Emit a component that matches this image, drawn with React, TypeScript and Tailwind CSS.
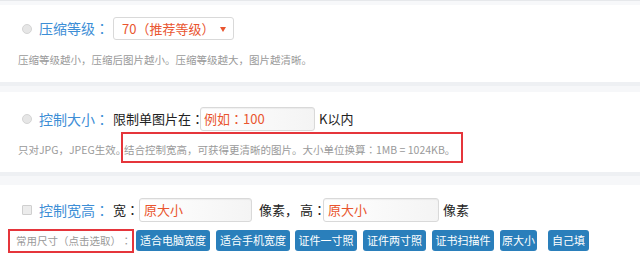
import React from "react";

const C = () => (
  <span className="font-['Noto_Sans_CJK_JP',sans-serif]">：</span>
);

const Radio = () => (
  <span className="inline-block w-[10px] h-[10px] rounded-full border border-[#d4d4d4] bg-[#e6e6e6] shrink-0" />
);
const Check = () => (
  <span className="inline-block w-[10px] h-[10px] rounded-[1px] border border-[#cfcfcf] bg-[#ececec] shrink-0" />
);

const Input = ({ w, children, pl }: { w: string; children: React.ReactNode; pl: string }) => (
  <div
    className={`${w} ${pl} h-[24px] rounded-[3px] border border-[#d9d9d9] bg-linear-to-r from-white to-[#f4f4f4] flex items-center text-[13px] text-[#e9552f] whitespace-nowrap shadow-[inset_0_1px_1px_rgba(0,0,0,0.05)]`}
  >
    {children}
  </div>
);

const Btn = ({ w, children }: { w: string; children: React.ReactNode }) => (
  <div
    className={`${w} h-[21px] rounded-[3px] bg-[#2a7fbb] text-white text-[11px] flex items-center justify-center shrink-0`}
  >
    {children}
  </div>
);

export default function App() {
  return (
    <div className="w-[640px] h-[261px] overflow-hidden bg-white font-['Microsoft_YaHei','Noto_Sans_CJK_SC',sans-serif] text-[#333]">
      <div className="h-[1px] bg-[#e6e8eb]" />
      <div className="h-[4px] bg-[#f7f8fa]" />

      {/* Section 1 */}
      <div className="h-[77px] pt-[12px]">
        <div className="flex items-center h-[23px] pl-[22px]">
          <Radio />
          <span className="ml-[7px] w-[74px] text-[14px] text-[#3d8ed6] whitespace-nowrap">
            压缩等级<C />
          </span>
          <div className="relative w-[121px] h-[23px] rounded-[3px] border border-[#d9d9d9] bg-white flex items-center pl-[8px] text-[13px] text-[#e9552f] whitespace-nowrap">
            70（推荐等级）
            <span className="absolute right-[7px] top-[9px] w-0 h-0 border-l-[3px] border-r-[3px] border-t-[5px] border-l-transparent border-r-transparent border-t-[#e9552f]" />
          </div>
        </div>
        <div className="mt-[10px] h-[20px] flex items-center pl-[18px] text-[10.5px] text-[#9a9a9a] whitespace-nowrap">
          压缩等级越小，压缩后图片越小。压缩等级越大，图片越清晰。
        </div>
      </div>

      <div className="h-[4px] bg-[#eef0f3]" />
      <div className="h-[6px] bg-[#f6f7f9]" />

      {/* Section 2 */}
      <div className="h-[80px] pt-[15px]">
        <div className="flex items-center h-[24px] pl-[22px]">
          <Radio />
          <span className="ml-[7px] w-[74px] text-[14px] text-[#3d8ed6] whitespace-nowrap">
            控制大小<C />
          </span>
          <span className="w-[87px] text-[13px] text-[#222] whitespace-nowrap">
            限制单图片在<C />
          </span>
          <Input w="w-[115px]" pl="pl-[3px]">
            例如<C />100
          </Input>
          <span className="ml-[4px] text-[13px] text-[#222]">K以内</span>
        </div>
        <div className="mt-[1px] h-[31px] flex items-center pl-[18px] text-[10.5px] text-[#9a9a9a] whitespace-nowrap">
          <span className="w-[103px] pt-[4px] overflow-visible">只对JPG，JPEG生效。</span>
          <span className="h-[31px] w-[342px] border-2 border-[#e5353b] flex items-center pl-[1px] pt-[4px] shrink-0">
            结合控制宽高，可获得更清晰的图片。大小单位换算<C />1MB = 1024KB。
          </span>
        </div>
      </div>

      <div className="h-[4px] bg-[#eef0f3]" />
      <div className="h-[9px] bg-[#f6f7f9]" />

      {/* Section 3 */}
      <div className="pt-[13px]">
        <div className="flex items-center h-[24px] pl-[22px]">
          <Check />
          <span className="ml-[7px] w-[74px] text-[14px] text-[#3d8ed6] whitespace-nowrap">
            控制宽高<C />
          </span>
          <span className="w-[26px] text-[13px] text-[#222] whitespace-nowrap">
            宽<C />
          </span>
          <Input w="w-[113px]" pl="pl-[4px]">原大小</Input>
          <span className="ml-[7px] w-[41px] text-[13px] text-[#222] whitespace-nowrap">像素，</span>
          <span className="w-[23px] text-[13px] text-[#222] whitespace-nowrap">
            高<C />
          </span>
          <Input w="w-[116px]" pl="pl-[4px]">原大小</Input>
          <span className="ml-[4px] text-[13px] text-[#222] whitespace-nowrap">像素</span>
        </div>
        <div className="mt-[7px] flex items-center h-[23px] pl-[8px]">
          <div className="w-[126px] h-[24px] border-2 border-[#e5353b] flex items-center pl-[6px] text-[10.5px] text-[#9a9a9a] whitespace-nowrap shrink-0">
            常用尺寸（点击选取）<C />
          </div>
          <div className="ml-[2px] flex items-center">
            <Btn w="w-[74px]">适合电脑宽度</Btn>
            <div className="ml-[6px]"><Btn w="w-[74px]">适合手机宽度</Btn></div>
            <div className="ml-[5px]"><Btn w="w-[62px]">证件一寸照</Btn></div>
            <div className="ml-[6px]"><Btn w="w-[63px]">证件两寸照</Btn></div>
            <div className="ml-[6px]"><Btn w="w-[62px]">证书扫描件</Btn></div>
            <div className="ml-[6px]"><Btn w="w-[37px]">原大小</Btn></div>
            <div className="ml-[11px]"><Btn w="w-[41px]">自己填</Btn></div>
          </div>
        </div>
      </div>
    </div>
  );
}
